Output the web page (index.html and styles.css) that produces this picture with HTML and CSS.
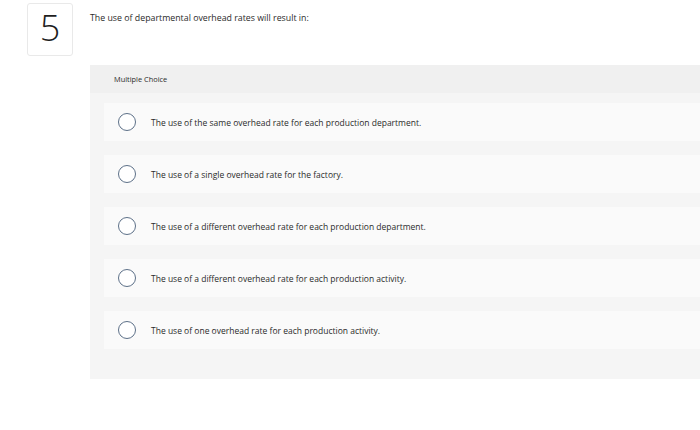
FILE: index.html
```html
<!DOCTYPE html>
<html>
<head>
<meta charset="utf-8">
<link rel="stylesheet" href="styles.css">
</head>
<body>
<div class="question">
  <div class="qnum">5</div>
  <div class="qtext">The use of departmental overhead rates will result in:</div>
</div>
<div class="panel">
  <div class="panel-head">Multiple Choice</div>
  <div class="options">
    <div class="option"><span class="radio"></span><span class="label">The use of the same overhead rate for each production department.</span></div>
    <div class="option"><span class="radio"></span><span class="label">The use of a single overhead rate for the factory.</span></div>
    <div class="option"><span class="radio"></span><span class="label">The use of a different overhead rate for each production department.</span></div>
    <div class="option"><span class="radio"></span><span class="label">The use of a different overhead rate for each production activity.</span></div>
    <div class="option"><span class="radio"></span><span class="label">The use of one overhead rate for each production activity.</span></div>
  </div>
</div>
</body>
</html>
```

FILE: styles.css
```css
html, body {
  margin: 0;
  padding: 0;
  background: #ffffff;
  overflow: hidden;
}
body {
  font-family: "Open Sans", "Liberation Sans", sans-serif;
  color: #2b2b2b;
  width: 700px;
  height: 430px;
}
.question {
  display: flex;
  align-items: flex-start;
  padding: 3px 0 0 27px;
}
.qnum {
  width: 44px;
  height: 47px;
  padding-bottom: 4px;
  border: 1px solid #e9e9e9;
  border-radius: 3px;
  display: flex;
  align-items: center;
  justify-content: center;
  font-size: 36px;
  font-weight: 350;
  line-height: 1;
  color: #1e1e1e;
  box-sizing: content-box;
}
.qtext {
  margin-left: 17px;
  margin-top: 9px;
  font-size: 8.8px;
  line-height: 12px;
  color: #2b2b2b;
}
.panel {
  margin: 9px -30px 0 90px;
  background: #f5f5f5;
}
.panel-head {
  height: 28px;
  display: flex;
  align-items: center;
  padding-left: 24px;
  font-size: 7.4px;
  color: #2b2b2b;
  background: #f0f0f0;
}
.options {
  display: flex;
  flex-direction: column;
  gap: 14px;
  padding: 10px 0 30px 14px;
}
.option {
  height: 38px;
  display: flex;
  align-items: center;
  padding-left: 14px;
  background: #fafafa;
}
.radio {
  width: 18px;
  height: 18px;
  box-sizing: border-box;
  border: 1.3px solid #5d7088;
  border-radius: 50%;
  background: #ffffff;
  flex: none;
}
.label {
  margin-left: 15px;
  font-size: 8.5px;
  color: #2b2b2b;
}
```
